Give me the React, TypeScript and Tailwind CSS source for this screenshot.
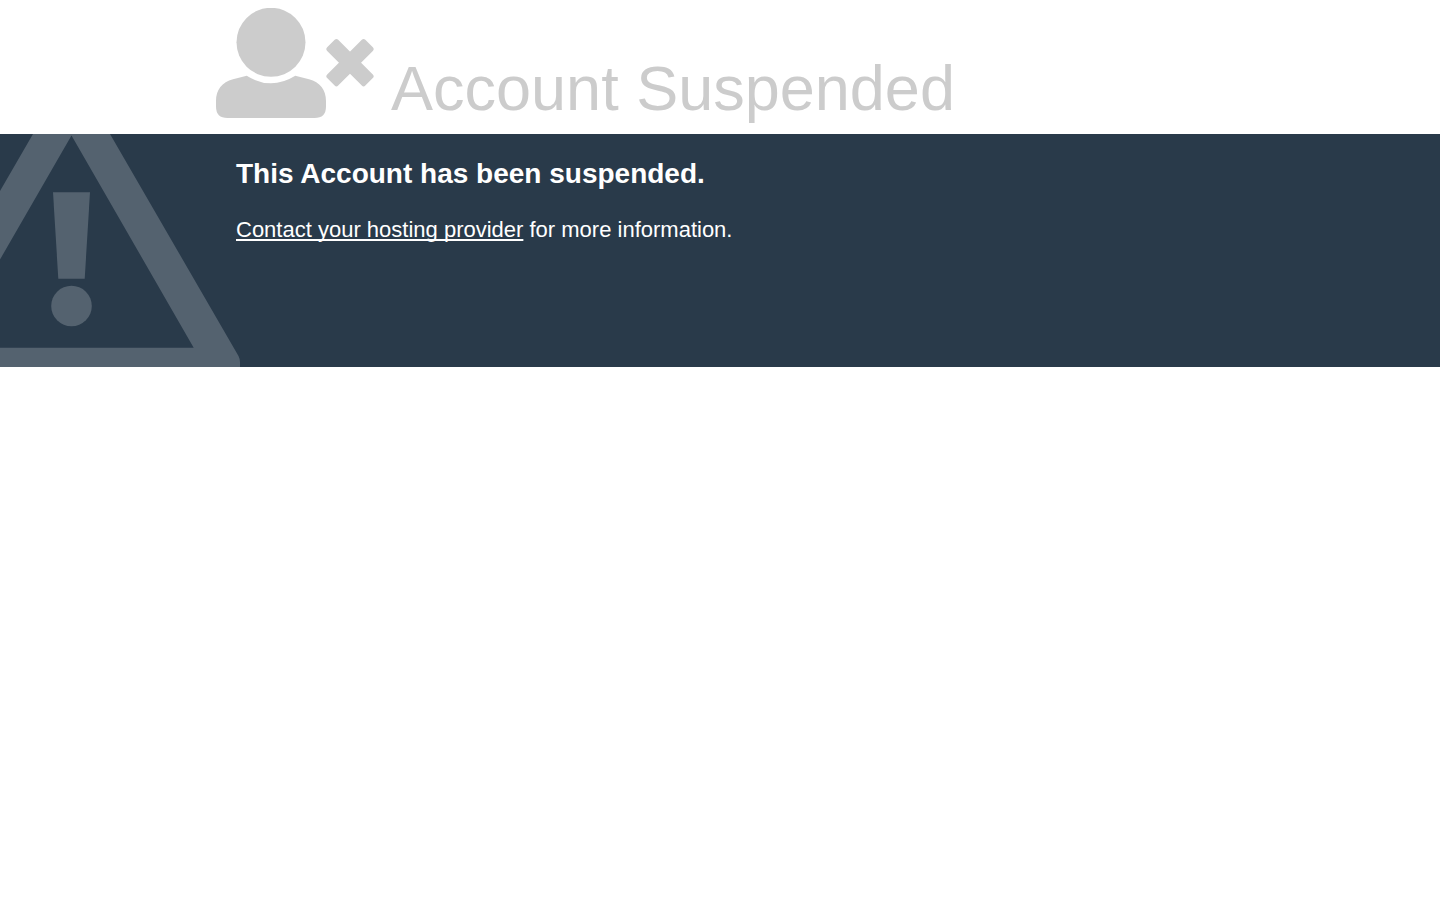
const FONT = "font-['Liberation_Sans',Arial,sans-serif]";

function UserRemoveIcon() {
  return (
    <svg
      viewBox="0 0 158 110"
      fill="currentColor"
      className="h-[110px] w-[158px] shrink-0"
      aria-hidden="true"
    >
      <circle cx="55" cy="34.3" r="34.5" />
      <path d="M30.7 67.8Q55 82.8 79.3 67.8L93 71.3C104 74 110 82 110 93V98.5Q110 110 98.5 110H11.500Q0 110 0 98.500V93C0 82 6 74 17 71.300Z" />
      <g transform="translate(134 54.700)">
        <rect x="-27" y="-7.800" width="54" height="15.600" rx="2.500" transform="rotate(45)" />
        <rect x="-27" y="-7.800" width="54" height="15.600" rx="2.500" transform="rotate(-45)" />
      </g>
    </svg>
  );
}

function WarningIcon() {
  return (
    <svg
      viewBox="0 0 240 233"
      fill="currentColor"
      className="absolute bottom-0 left-0 h-[233px] w-[240px] text-[#54626f]"
      aria-hidden="true"
    >
      <path
        fillRule="evenodd"
        d="M33 0H110L238.500 222Q240 225 240 228V233H0V213.700H193.700L71.500 1.500L0 125.500V57Z"
      />
      <path d="M53 58.300H90L84.700 144.700H58.300Z" />
      <circle cx="71.500" cy="172" r="20.300" />
    </svg>
  );
}

export default function App() {
  return (
    <div className={`min-h-screen bg-white ${FONT}`}>
      <header className="mx-auto flex w-[70%] items-end gap-[17px] pt-2 pb-4 text-[#cccccc]">
        <UserRemoveIcon />
        <h1 className="text-[63px] leading-[60px]">Account Suspended</h1>
      </header>

      <section className="relative overflow-hidden bg-[#293a4a] text-white">
        <WarningIcon />
        <div className="relative mx-auto min-h-[233px] w-[70%] px-5 pt-6">
          <h2 className="text-[28px] leading-8 font-bold">This Account has been suspended.</h2>
          <p className="mt-6 text-[22px] leading-8">
            <a
              href="#"
              className="underline decoration-2 underline-offset-2 [text-decoration-skip-ink:none]"
            >
              Contact your hosting provider
            </a>{" "}
            for more information.
          </p>
        </div>
      </section>
    </div>
  );
}
